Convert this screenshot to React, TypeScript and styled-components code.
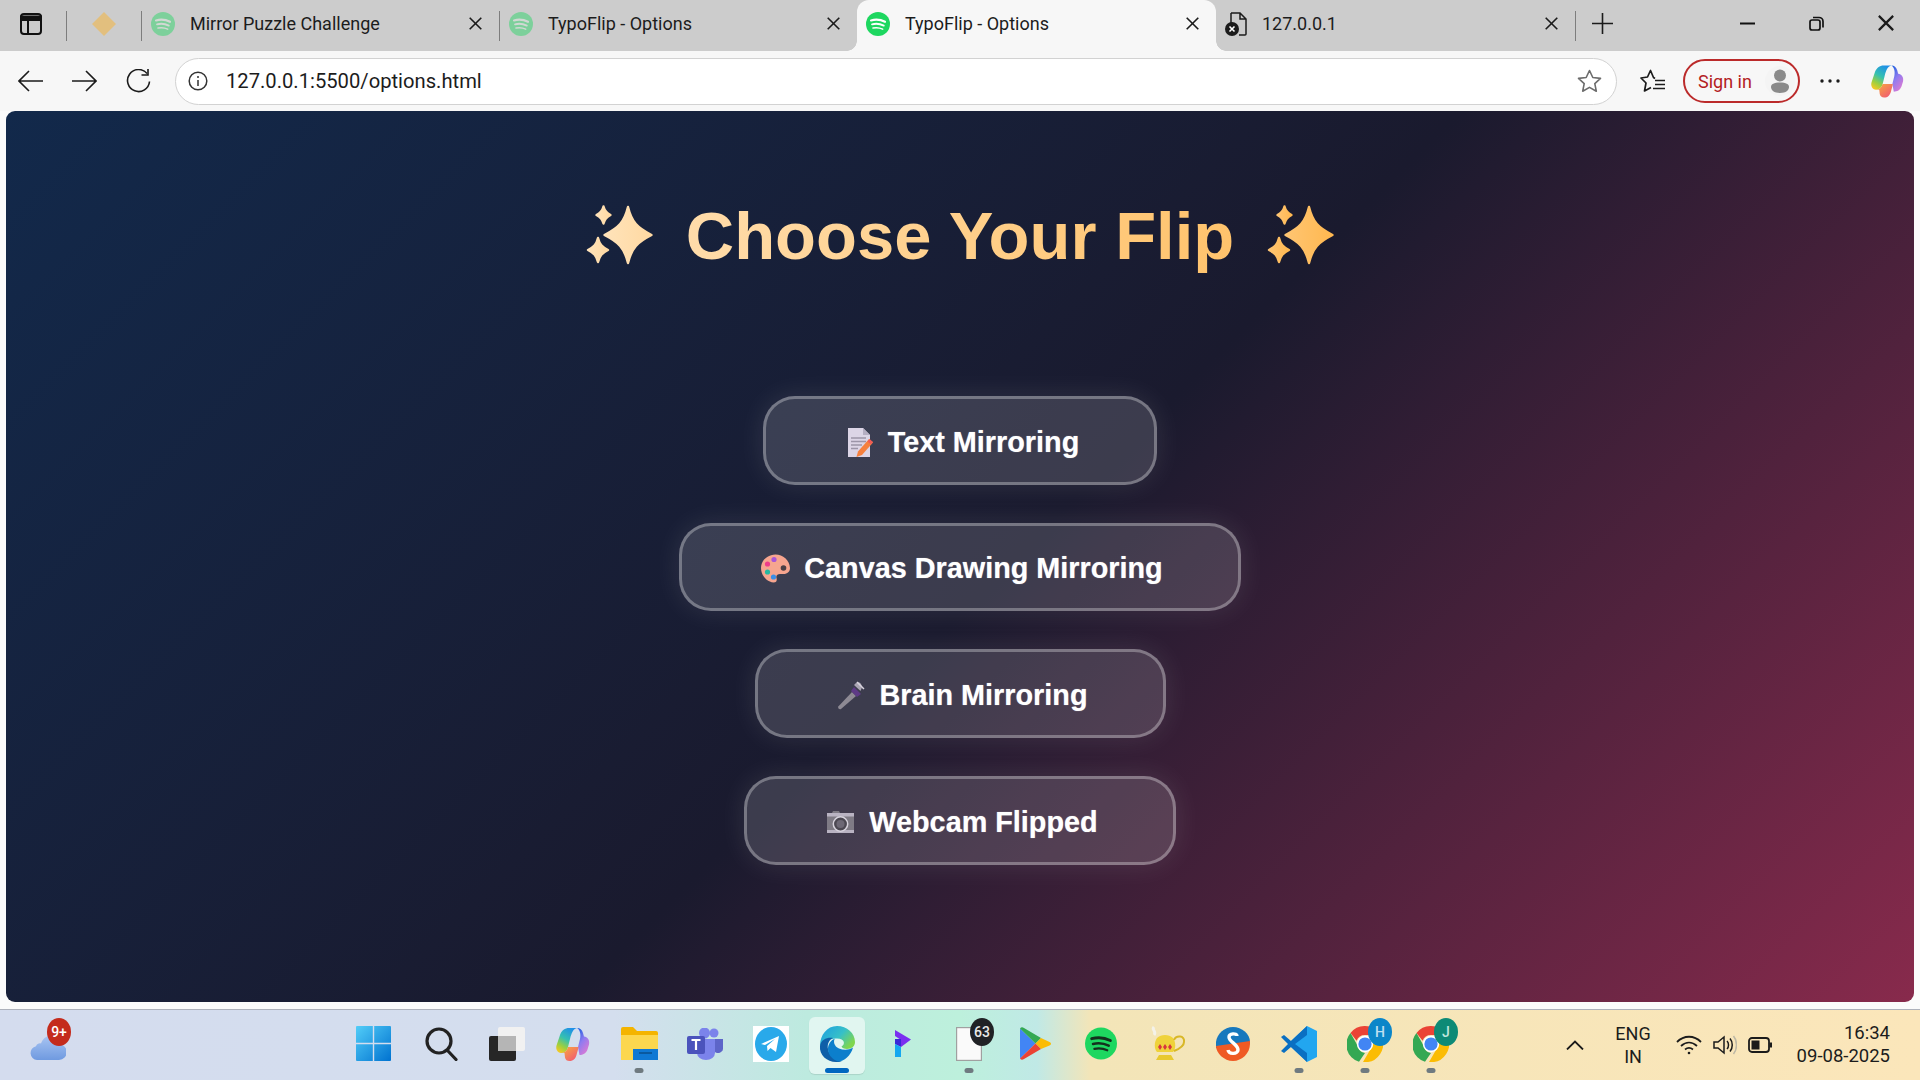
import styled, { createGlobalStyle } from "styled-components"

const GlobalStyle = createGlobalStyle`
  html, body {
    margin: 0;
    padding: 0;
    width: 1920px;
    height: 1080px;
    overflow: hidden;
    background: #f7f7f7;
    font-family: Roboto, "Liberation Sans", sans-serif;
  }
  * { box-sizing: border-box; }
`

/* ---------- small drawings ---------- */

const SpotifyIcon = ({ size = 24, faded = false }: { size?: number; faded?: boolean }) => (
  <svg width={size} height={size} viewBox="0 0 24 24" opacity={faded ? 0.45 : 1}>
    <circle cx="12" cy="12" r="12" fill="#1ed760" />
    <g fill="none" stroke={faded ? "#dbe8df" : "#fff"} strokeLinecap="round">
      <path d="M5 8.4c4.6-1.3 9.6-.9 14 1.4" strokeWidth="2.1" />
      <path d="M6 12.3c4-1 8-.6 11.8 1.3" strokeWidth="1.8" />
      <path d="M7 16c3.3-.7 6.6-.4 9.7 1.1" strokeWidth="1.5" />
    </g>
  </svg>
)

const SpotifyDark = () => (
  <svg width="32" height="33" viewBox="0 0 24 24">
    <circle cx="12" cy="12" r="12" fill="#1ed760" />
    <g fill="none" stroke="#14301e" strokeLinecap="round">
      <path d="M5 8.4c4.6-1.3 9.6-.9 14 1.4" strokeWidth="2.2" />
      <path d="M6 12.3c4-1 8-.6 11.8 1.3" strokeWidth="1.9" />
      <path d="M7 16c3.3-.7 6.6-.4 9.7 1.1" strokeWidth="1.6" />
    </g>
  </svg>
)

const CloseIcon = ({ size = 13, weight = 1.6 }: { size?: number; weight?: number }) => (
  <svg width={size} height={size} viewBox="0 0 13 13">
    <path d="M.7.7l11.6 11.6M12.3.7L.7 12.3" stroke="#1b1b1b" strokeWidth={weight} fill="none" />
  </svg>
)

const CopilotIcon = ({ id, width, height }: { id: string; width: number; height: number }) => (
  <svg width={width} height={height} viewBox="0 0 34 34">
    <defs>
      <linearGradient id={`${id}a`} x1="0.7" x2="0.2" y1="0" y2="1">
        <stop offset="0" stopColor="#1f8fe8" />
        <stop offset="0.45" stopColor="#35c1b0" />
        <stop offset="0.75" stopColor="#9ccf3f" />
        <stop offset="1" stopColor="#f6c922" />
      </linearGradient>
      <linearGradient id={`${id}b`} x1="0.2" x2="0.8" y1="0" y2="1">
        <stop offset="0" stopColor="#1f5fe0" />
        <stop offset="0.45" stopColor="#8f7cf0" />
        <stop offset="1" stopColor="#e57ad0" />
      </linearGradient>
      <linearGradient id={`${id}c`} x1="0" x2="1" y1="0" y2="1">
        <stop offset="0" stopColor="#f8b03a" />
        <stop offset="1" stopColor="#f0507a" />
      </linearGradient>
    </defs>
    <path d="M13 1h8c-4 1-5.5 5-7 11l-2 8c-1 4-3.5 6-7 6C1.5 26-.5 22 .5 18.5L4 8c1.5-4.5 5-7 9-7z" fill={`url(#${id}a)`} />
    <path d="M21 1c3 0 5 1.5 6 5l1 3.5c3.5.5 6 3.5 5 8l-1.500 5c-1.500 4-4.500 5.500-8 5.500L22 20l2-8c1-5 0-9-3-11z" fill={`url(#${id}b)`} />
    <path d="M5 26c3.5 0 6-2 7-6h10.500c-.5 3-1 4-2 8-1 3.500-3 6-7 6-2.500 0-4-1-4.500-3.500L8.500 26z" fill={`url(#${id}c)`} />
  </svg>
)

const star = (cx: number, cy: number, rx: number, ry: number) =>
  `M${cx} ${cy - ry}C${cx + rx * 0.16} ${cy - ry * 0.45} ${cx + rx * 0.4} ${cy - ry * 0.26} ${cx + rx} ${cy}` +
  `C${cx + rx * 0.4} ${cy + ry * 0.26} ${cx + rx * 0.16} ${cy + ry * 0.45} ${cx} ${cy + ry}` +
  `C${cx - rx * 0.16} ${cy + ry * 0.45} ${cx - rx * 0.4} ${cy + ry * 0.26} ${cx - rx} ${cy}` +
  `C${cx - rx * 0.4} ${cy - ry * 0.26} ${cx - rx * 0.16} ${cy - ry * 0.45} ${cx} ${cy - ry}Z`

const Sparkles = ({ from, to, id }: { from: string; to: string; id: string }) => (
  <svg width="67" height="60" viewBox="0 0 67 60">
    <defs>
      <linearGradient id={id} x1="0" x2="1" y1="0" y2="0">
        <stop offset="0" stopColor={from} />
        <stop offset="1" stopColor={to} />
      </linearGradient>
    </defs>
    <g fill={`url(#${id})`} stroke={`url(#${id})`} strokeWidth="2.4" strokeLinejoin="round">
      <path d={star(42, 30, 23.5, 28)} />
      <path d={star(17.5, 10, 7, 8.5)} />
      <path d={star(12, 45, 10, 12)} />
    </g>
  </svg>
)

const MemoEmoji = () => (
  <svg width="29" height="29" viewBox="0 0 29 29">
    <path d="M3 0h15l7 7v22H3z" fill="#dcd5e6" />
    <path d="M18 0l7 7h-7z" fill="#b5aec2" />
    <path d="M6 10h15M6 13.5h15M6 17h11M6 20.5h7" stroke="#9c95a8" strokeWidth="1.3" />
    <path d="M24 11l4 3.5-11 12.5-5.5 2 1.5-5.5z" fill="#f5803e" />
    <path d="M24.5 11l3.5 3-2 2.5-3.5-3z" fill="#f15b56" />
  </svg>
)

const PaletteEmoji = () => (
  <svg width="29" height="29" viewBox="0 0 29 29">
    <path d="M14.5.5C6.5.5 0 6.5 0 14s6 14 12.5 14.5c3.5 0 3.5-2.5 3-4.5-.7-2.5 1-4 3.5-4h3.500c4 0 6.500-2.500 6.500-6C28.500 6 22 .5 14.500.5z" fill="#f6a58f" />
    <circle cx="22.5" cy="14" r="2.8" fill="#4a3f46" />
    <circle cx="6.5" cy="10" r="2.6" fill="#ee3d8b" />
    <circle cx="13" cy="5.5" r="2.6" fill="#a855d8" />
    <circle cx="6.5" cy="18" r="2.6" fill="#26b8a0" />
    <circle cx="12.5" cy="23" r="2.6" fill="#3a8ee6" />
  </svg>
)

const MicEmoji = () => (
  <svg width="29" height="29" viewBox="0 0 29 29">
    <path d="M15 11l4 4L4 28c-1.5 1-3.5-.8-2.7-2.5z" fill="#8e8a94" />
    <path d="M17 6l7 7-4 3-6-6z" fill="#5e3a86" />
    <path d="M19 2c3-2.4 7 1.5 5.5 5.5l-1 2.5L17 4z" fill="#a9a4b2" />
    <path d="M20 1l7 7" stroke="#d8d4de" strokeWidth="1.5" />
  </svg>
)

const CameraEmoji = () => (
  <svg width="29" height="24" viewBox="0 0 29 24">
    <path d="M1 3h5l1-2h6l1 2h14v20H1z" fill="#7f7b85" />
    <rect x="1" y="3" width="27" height="3.5" fill="#b9b3c2" />
    <rect x="1" y="20" width="27" height="3" fill="#b9b3c2" />
    <circle cx="14.5" cy="14" r="7.2" fill="#4c4852" stroke="#d8d4de" strokeWidth="1.5" />
    <circle cx="14.5" cy="14" r="4" fill="#6d6875" />
  </svg>
)

const ChromeIcon = () => (
  <svg width="36" height="36" viewBox="0 0 36 36">
    <path d="M18 0a18 18 0 0 1 15.6 9H18a9 9 0 0 0-8.4 5.8L3.5 7A18 18 0 0 1 18 0z" fill="#ea4335" />
    <path d="M3.5 7l7.6 13.5A8 8 0 0 0 18 27l-6 8.8A18 18 0 0 1 3.5 7z" fill="#34a853" />
    <path d="M33.6 9A18 18 0 0 1 16 36l8.5-14.5A8 8 0 0 0 24 12z" fill="#fbbc04" />
    <circle cx="18" cy="18" r="8.2" fill="#fff" />
    <circle cx="18" cy="18" r="6.6" fill="#4285f4" />
  </svg>
)

/* ---------- tab strip ---------- */

const TabStrip = styled.div`
  height: 51px;
  display: flex;
  align-items: stretch;
  background: #cccccc;
`

const SideSlot = styled.div<{ $w: number }>`
  width: ${(p) => p.$w}px;
  flex: none;
  display: flex;
  align-items: center;
  justify-content: center;
  padding-bottom: 4px;
`

const Sep = styled.div`
  width: 1px;
  height: 30px;
  flex: none;
  margin-top: 11px;
  background: #7d7d7d;
`

const Tab = styled.div<{ $active?: boolean; $w: number }>`
  width: ${(p) => p.$w}px;
  flex: none;
  display: flex;
  align-items: center;
  padding: 0 17px 4px 9px;
  font-size: 18px;
  color: #1c1c1c;
  position: relative;
  background: ${(p) => (p.$active ? "#f7f7f7" : "transparent")};
  border-radius: ${(p) => (p.$active ? "12px 12px 0 0" : "0")};

  ${(p) =>
    p.$active &&
    `
    &::before, &::after {
      content: "";
      position: absolute;
      bottom: 0;
      width: 10px;
      height: 10px;
    }
    &::before {
      left: -10px;
      background: radial-gradient(circle at 0 0, transparent 9.5px, #f7f7f7 10px);
    }
    &::after {
      right: -10px;
      background: radial-gradient(circle at 100% 0, transparent 9.5px, #f7f7f7 10px);
    }
  `}
`

const TabTitle = styled.span`
  flex: 1;
  margin-left: 15px;
  white-space: nowrap;
`

const WindowButtons = styled.div`
  margin-left: auto;
  display: flex;
  align-items: center;
  width: 207px;
  padding: 0 0 5px 0;
`

const WinBtn = styled.div`
  width: 69px;
  display: flex;
  align-items: center;
  justify-content: center;
`

/* ---------- toolbar ---------- */

const Toolbar = styled.div`
  height: 60px;
  display: flex;
  align-items: center;
  background: #f7f7f7;
  padding: 0 0 0 3px;
`

const NavBtn = styled.div`
  width: 54px;
  height: 44px;
  flex: none;
  display: flex;
  align-items: center;
  justify-content: center;
`

const AddressBar = styled.div`
  width: 1442px;
  height: 47px;
  margin-left: 10px;
  border: 1.5px solid #d2d2d2;
  border-radius: 24px;
  background: #fff;
  display: flex;
  align-items: center;
  padding: 0 14px 0 12px;
  color: #1c1c1c;
  font-size: 20.2px;
`

const Url = styled.span`
  margin-left: 18px;
  flex: 1;
`

const ToolGroup = styled.div`
  margin-left: 9px;
  display: flex;
  align-items: center;
  gap: 3px;
`

const SignIn = styled.div`
  width: 117px;
  height: 44px;
  flex: none;
  border: 2px solid #bb2a2a;
  border-radius: 22px;
  color: #b3211f;
  font-size: 18px;
  display: flex;
  align-items: center;
  justify-content: space-between;
  padding: 0 3px 0 13px;
`

const Avatar = styled.div`
  width: 30px;
  height: 30px;
  border-radius: 50%;
  background: #f4f4f4;
  display: flex;
  align-items: center;
  justify-content: center;
`

/* ---------- page ---------- */

const PageFrame = styled.div`
  height: 898px;
  padding: 0 6px 7px;
  background: #fbfbfb;
`

const Page = styled.main`
  height: 891px;
  border-radius: 9px;
  background: linear-gradient(135deg, #12294b 0%, #1a1a2e 52%, #882a4c 100%);
  display: flex;
  flex-direction: column;
  align-items: center;
  padding-top: 93px;
  font-family: "Liberation Sans", Arial, sans-serif;
`

const Heading = styled.h1`
  margin: 0 0 130px;
  height: 62px;
  display: flex;
  align-items: center;
  gap: 33px;
  font-size: 67px;
  font-weight: 700;
  line-height: 62px;
`

const HeadingText = styled.span`
  background: linear-gradient(90deg, #ffdcaa, #ffc36c);
  -webkit-background-clip: text;
  background-clip: text;
  color: transparent;
  line-height: 80px;
  padding-top: 2px;
`

const Buttons = styled.div`
  display: flex;
  flex-direction: column;
  align-items: center;
  gap: 38.2px;
`

const ChoiceButton = styled.button`
  height: 88.5px;
  padding: 4px 75px 0 79px;
  display: flex;
  align-items: center;
  gap: 14px;
  border: 3px solid rgba(255, 255, 255, 0.3);
  border-radius: 32px;
  background: rgba(255, 255, 255, 0.15);
  box-shadow: 0 0 28px rgba(255, 255, 255, 0.1);
  color: #fff;
  font-family: inherit;
  font-size: 28.8px;
  font-weight: 700;
  text-shadow: 0 0 1px rgba(255, 255, 255, 0.6);
`

/* ---------- taskbar ---------- */

const Taskbar = styled.footer`
  height: 71px;
  border-top: 1.5px solid #adb1bb;
  background: linear-gradient(
    90deg,
    #d4dcee 0%,
    #d4deee 32%,
    #bdeadf 42%,
    #bdf0dc 50%,
    #c0e9e6 54%,
    #f3e5b8 56.8%,
    #fbe6ba 100%
  );
  position: relative;
  display: flex;
  align-items: center;
`

const Weather = styled.div`
  width: 342px;
  flex: none;
  padding: 6px 0 0 30px;
  position: relative;
  height: 100%;
  display: flex;
  align-items: center;
`

const AppSlot = styled.div`
  width: 66px;
  height: 100%;
  flex: none;
  position: relative;
  display: flex;
  align-items: center;
  justify-content: center;
  padding-bottom: 3px;
`

const StartSlot = styled(AppSlot)`
  padding-right: 4px;
`

const ActiveSlot = styled(AppSlot)`
  &::before {
    content: "";
    position: absolute;
    left: 5px;
    right: 5px;
    top: 7px;
    bottom: 6px;
    border-radius: 6px;
    background: rgba(255, 255, 255, 0.55);
    box-shadow: 0 1px 1px rgba(0, 0, 0, 0.1);
  }
  svg { position: relative; }
`

const Running = styled.i<{ $active?: boolean }>`
  position: absolute;
  bottom: 7px;
  left: 50%;
  transform: translateX(-50%);
  width: ${(p) => (p.$active ? 24 : 9)}px;
  height: 5px;
  border-radius: 3px;
  background: ${(p) => (p.$active ? "#0067c0" : "#6f7a80")};
`

const Badge = styled.span<{ $bg: string; $x: number; $color?: string }>`
  position: absolute;
  top: 8px;
  left: ${(p) => p.$x}px;
  width: 24px;
  height: 28px;
  border-radius: 50%;
  background: ${(p) => p.$bg};
  color: ${(p) => p.$color ?? "#fff"};
  font-size: 14px;
  font-weight: 500;
  display: flex;
  align-items: center;
  justify-content: center;
`

const Tray = styled.div`
  display: flex;
  align-items: center;
  height: 100%;
  margin-left: auto;
  width: 456px;
  color: #1c1c1c;
  padding: 0 30px 0 102px;
`

const Lang = styled.div`
  width: 58px;
  margin: 0 14px 0 20px;
  text-align: center;
  font-size: 18px;
  line-height: 23px;
`

const Clock = styled.div`
  margin-left: auto;
  text-align: right;
  font-size: 18.5px;
  line-height: 23px;
  white-space: nowrap;
`

const TrayIcon = styled.div`
  margin-right: 11px;
  display: flex;
  align-items: center;
`

const App = () => {
  return (
    <>
      <GlobalStyle />
      <TabStrip>
        <SideSlot $w={62}>
          <svg width="22" height="22" viewBox="0 0 22 22" fill="none" stroke="#111" strokeWidth="2">
            <rect x="1" y="1" width="20" height="20" rx="3" />
            <path d="M1 3.5h20V7H1z" fill="#111" />
            <path d="M8 7v14" />
          </svg>
        </SideSlot>
        <SideSlot $w={4} />
        <Sep />
        <SideSlot $w={74}>
          <svg width="24" height="24" viewBox="0 0 24 24">
            <path d="M12 0l12 12-12 12L0 12z" fill="#e2bf7e" />
          </svg>
        </SideSlot>
        <Sep />
        <Tab $w={357}>
          <SpotifyIcon faded />
          <TabTitle>Mirror Puzzle Challenge</TabTitle>
          <CloseIcon />
        </Tab>
        <Sep />
        <Tab $w={357}>
          <SpotifyIcon faded />
          <TabTitle>TypoFlip - Options</TabTitle>
          <CloseIcon />
        </Tab>
        <Tab $w={359} $active>
          <SpotifyIcon />
          <TabTitle>TypoFlip - Options</TabTitle>
          <CloseIcon />
        </Tab>
        <Tab $w={359}>
          <svg width="22" height="24" viewBox="0 0 22 24" fill="none">
            <path d="M6 1h9l6 6v15a1 1 0 0 1-1 1h-6M6 1v10M15 1v6h6" stroke="#1b1b1b" strokeWidth="1.5" />
            <circle cx="7" cy="17" r="7" fill="#1b1b1b" />
            <path d="M4.5 14.5l5 5M9.5 14.5l-5 5" stroke="#fff" strokeWidth="1.6" />
          </svg>
          <TabTitle>127.0.0.1</TabTitle>
          <CloseIcon />
        </Tab>
        <Sep />
        <SideSlot $w={52}>
          <svg width="21" height="21" viewBox="0 0 21 21">
            <path d="M10.5 0v21M0 10.5h21" stroke="#1b1b1b" strokeWidth="1.6" />
          </svg>
        </SideSlot>
        <WindowButtons>
          <WinBtn>
            <svg width="15" height="3" viewBox="0 0 15 3">
              <path d="M0 1.5h15" stroke="#111" strokeWidth="2" />
            </svg>
          </WinBtn>
          <WinBtn>
            <svg width="15" height="15" viewBox="0 0 15 15" fill="none" stroke="#111" strokeWidth="1.7">
              <rect x="1" y="4" width="10" height="10" rx="2" />
              <path d="M4 1.5h6a4 4 0 0 1 4 4v6" />
            </svg>
          </WinBtn>
          <WinBtn>
            <CloseIcon size={16} weight={1.8} />
          </WinBtn>
        </WindowButtons>
      </TabStrip>

      <Toolbar>
        <NavBtn>
          <svg width="25" height="22" viewBox="0 0 25 22" fill="none" stroke="#1b1b1b" strokeWidth="1.6">
            <path d="M25 11H1.5M11 1L1 11l10 10" />
          </svg>
        </NavBtn>
        <NavBtn>
          <svg width="25" height="22" viewBox="0 0 25 22" fill="none" stroke="#1b1b1b" strokeWidth="1.6">
            <path d="M0 11h23.5M14 1l10 10-10 10" />
          </svg>
        </NavBtn>
        <NavBtn>
          <svg width="25" height="25" viewBox="0 0 25 25" fill="none" stroke="#1b1b1b" strokeWidth="1.6">
            <path d="M21 4.5A11 11 0 1 0 23.5 12.5" />
            <path d="M22 0v6h-6.5" />
          </svg>
        </NavBtn>
        <AddressBar>
          <svg width="20" height="20" viewBox="0 0 20 20" fill="none" stroke="#333" strokeWidth="1.5">
            <circle cx="10" cy="10" r="8.8" />
            <path d="M10 9v6M10 5v2" />
          </svg>
          <Url>127.0.0.1:5500/options.html</Url>
          <svg width="25" height="24" viewBox="0 0 25 24" fill="none" stroke="#6c6c6c" strokeWidth="1.6" strokeLinejoin="round">
            <path d="M12.5 1.5l3.3 7 7.7.9-5.7 5.2 1.5 7.6-6.8-3.8-6.8 3.8 1.5-7.6L1.5 9.4l7.7-.9z" />
          </svg>
        </AddressBar>
        <ToolGroup>
          <NavBtn>
            <svg width="26" height="25" viewBox="0 0 26 25" fill="none" stroke="#1b1b1b" strokeWidth="1.7" strokeLinejoin="round">
              <path d="M15 9.5l-1.5-1L10.5 1.5 7.5 8 1 9l5 5-1.5 8 6.5-3.5" />
              <path d="M15 11.5h10M15 15.5h10M13 19.5h12" />
            </svg>
          </NavBtn>
          <SignIn>
            Sign in
            <Avatar>
              <svg width="20" height="24" viewBox="0 0 20 24" fill="#8a8a8a">
                <circle cx="10" cy="6.5" r="6" />
                <path d="M1 18c0-3 3-4.5 9-4.5s9 1.5 9 4.5-3 6-9 6-9-3-9-6z" />
              </svg>
            </Avatar>
          </SignIn>
          <NavBtn>
            <svg width="20" height="4" viewBox="0 0 20 4" fill="#1b1b1b">
              <circle cx="2" cy="2" r="1.7" />
              <circle cx="10" cy="2" r="1.7" />
              <circle cx="18" cy="2" r="1.7" />
            </svg>
          </NavBtn>
          <NavBtn>
            <CopilotIcon id="cpt" width={33} height={36} />
          </NavBtn>
        </ToolGroup>
      </Toolbar>

      <PageFrame>
        <Page>
          <Heading>
            <Sparkles id="sp1" from="#ffe3ba" to="#ffd9a2" />
            <HeadingText>Choose Your Flip</HeadingText>
            <Sparkles id="sp2" from="#ffc572" to="#ffb850" />
          </Heading>
          <Buttons>
            <ChoiceButton><MemoEmoji />Text Mirroring</ChoiceButton>
            <ChoiceButton><PaletteEmoji />Canvas Drawing Mirroring</ChoiceButton>
            <ChoiceButton><MicEmoji />Brain Mirroring</ChoiceButton>
            <ChoiceButton><CameraEmoji />Webcam Flipped</ChoiceButton>
          </Buttons>
        </Page>
      </PageFrame>

      <Taskbar>
        <Weather>
          <svg width="36" height="24" viewBox="0 0 36 24">
            <defs>
              <linearGradient id="cloud" x1="0" x2="0" y1="0" y2="1">
                <stop offset="0" stopColor="#a8c4f2" />
                <stop offset="1" stopColor="#6f9ae0" />
              </linearGradient>
            </defs>
            <path d="M26 2l5 1-2 5z" fill="#f0922c" />
            <path d="M7 24a7 7 0 0 1-1-13.800C7 8 9 7 11 7.500 12.500 3 16 0 20 0c5 0 8 3.500 8.500 8A8 8 0 0 1 29 24z" fill="url(#cloud)" />
          </svg>
          <Badge $bg="#c42b1c" $x={47} $color="#fff">9+</Badge>
        </Weather>
        <StartSlot>
          <svg width="35" height="35" viewBox="0 0 35 35">
            <defs>
              <linearGradient id="win" x1="0" x2="1" y1="0" y2="1">
                <stop offset="0" stopColor="#52cdf8" />
                <stop offset="1" stopColor="#0072d0" />
              </linearGradient>
            </defs>
            <path d="M1 0h15.8v16.8H0V1a1 1 0 0 1 1-1zM18.2 0H34a1 1 0 0 1 1 1v15.8H18.2zM0 18.2h16.8V35H1a1 1 0 0 1-1-1zM18.2 18.2H35V34a1 1 0 0 1-1 1H18.2z" fill="url(#win)" />
          </svg>
        </StartSlot>
        <AppSlot>
          <svg width="33" height="34" viewBox="0 0 33 34" fill="none" stroke="#222" strokeWidth="3.2" strokeLinecap="round">
            <circle cx="14" cy="14" r="12" />
            <path d="M23 24l8 8.5" />
          </svg>
        </AppSlot>
        <AppSlot>
          <svg width="36" height="34" viewBox="0 0 36 34">
            <rect x="0" y="9" width="27" height="25" rx="2" fill="#262626" />
            <rect x="9" y="0" width="27" height="24" rx="2" fill="#f1f1f1" />
            <rect x="9" y="9" width="18" height="15" fill="#b5b5b5" />
          </svg>
        </AppSlot>
        <AppSlot>
          <CopilotIcon id="cpb" width={36} height={34} />
        </AppSlot>
        <AppSlot>
          <svg width="37" height="33" viewBox="0 0 37 33">
            <path d="M0 2a2 2 0 0 1 2-2h10l4 4h19a2 2 0 0 1 2 2v27H0z" fill="#f4b400" />
            <path d="M0 8h37v25H0z" fill="#fcd74f" />
            <path d="M12 22h25v11H12z" fill="#0f78d4" />
            <path d="M18 26h13" stroke="#0a4f8e" strokeWidth="1.5" />
          </svg>
          <Running />
        </AppSlot>
        <AppSlot>
          <svg width="36" height="32" viewBox="0 0 36 32">
            <circle cx="27" cy="5" r="4.5" fill="#7b83eb" />
            <circle cx="17.5" cy="5" r="5.5" fill="#7b83eb" />
            <path d="M10 11h18v14a9 7 0 0 1-18 0z" fill="#7b83eb" />
            <path d="M28 11h8v10a5 5 0 0 1-8 3z" fill="#5d65c9" />
            <rect x="0" y="8" width="18" height="18" rx="2" fill="#4b53bc" />
            <path d="M4.5 12h9M9 12v10" stroke="#fff" strokeWidth="2.2" />
          </svg>
        </AppSlot>
        <AppSlot>
          <svg width="36" height="36" viewBox="0 0 36 36">
            <rect width="36" height="36" fill="#fff" />
            <ellipse cx="18" cy="18" rx="16" ry="17" fill="#29a9ea" />
            <path d="M8 18l18-8-3 16-5.5-4-3 3-.5-5 8-7-10 6z" fill="#fff" />
          </svg>
        </AppSlot>
        <ActiveSlot>
          <svg width="36" height="36" viewBox="0 0 36 36">
            <defs>
              <linearGradient id="edgeA" x1="0" x2="1" y1="0" y2="0.6">
                <stop offset="0" stopColor="#1b9de2" />
                <stop offset="0.6" stopColor="#36c0c8" />
                <stop offset="1" stopColor="#7fd64f" />
              </linearGradient>
            </defs>
            <path d="M18 0c10 0 18 7 18 16 0 4-3 7-8 7-3 0-5-1-5.5-2.5 4-2 3.5-8-4.5-8C11 12.5 6 15 1 20 1 9 8 0 18 0z" fill="url(#edgeA)" />
            <path d="M1 20C2 13 9 11 14 12c-4 2-6 6-5 11 1 6 7 12 14 12-2 1-4 1-6 1C8 36 0 29 1 20z" fill="#0f5fa8" />
            <path d="M9 23c0-5 3-9 7-10.5-2 2.5-1 8 4 10 5 2 10 1.5 14-1-2 8-9 14-15 14-6-2-10-7-10-12.5z" fill="#0c7fcc" />
          </svg>
          <Running $active />
        </ActiveSlot>
        <AppSlot>
          <svg width="16" height="27" viewBox="0 0 16 27">
            <path d="M0 0l16 9.5L6 17V10L0 6z" fill="#7a2ff0" />
            <path d="M0 9h6v8l-6-3z" fill="#3a28d8" />
            <path d="M0 14l6 3v10H0z" fill="#14a8f0" />
          </svg>
        </AppSlot>
        <AppSlot>
          <svg width="26" height="34" viewBox="0 0 26 34">
            <rect x="0.6" y="0.6" width="24.8" height="32.8" fill="#fafafa" stroke="#a0a0a0" strokeWidth="1.2" />
          </svg>
          <Badge $bg="#202225" $x={34} $color="#e8e8e8">63</Badge>
          <Running />
        </AppSlot>
        <AppSlot>
          <svg width="31" height="33" viewBox="0 0 31 33">
            <path d="M0 1.5v30L15.5 16.5z" fill="#4285f4" />
            <path d="M0 1.5c1-1.5 2.5-1.5 4-.6L21 11l-5.5 5.5z" fill="#34a853" />
            <path d="M21 11l8.5 4c2 1 2 2.5 0 3.5L21 22l-5.500-5.500z" fill="#fbbc04" />
            <path d="M0 31.500c1 1.500 2.500 1.500 4 .6L21 22l-5.500-5.500z" fill="#ea4335" />
          </svg>
        </AppSlot>
        <AppSlot>
          <SpotifyDark />
        </AppSlot>
        <AppSlot>
          <svg width="36" height="36" viewBox="0 0 36 36">
            <path d="M5 1c-3 3 3 4 0 8" stroke="#f4f2ea" strokeWidth="3" fill="none" />
            <path d="M8 12c4-4 12-4 16 0 3 4 3 11 0 14H8c-3-3-3-10 0-14z" fill="#efd23a" />
            <path d="M25 14c2-5 11-5 10 2 0 4-5 7-10 9" stroke="#d8b727" strokeWidth="2" fill="none" />
            <path d="M10 29h12l3 5H7z" fill="#e8c92f" />
            <path d="M11 18l2 3-2 3-2-3zM16 18l2 3-2 3-2-3zM21 18l2 3-2 3-2-3z" fill="#d9363e" />
          </svg>
        </AppSlot>
        <AppSlot>
          <svg width="34" height="34" viewBox="0 0 34 34">
            <path d="M17 0c9 0 17 7 17 15L0 21V15C1 7 8 0 17 0z" fill="#1778bd" />
            <path d="M0 19l34-5v3c0 9-8 17-17 17S0 26 0 19z" fill="#ef5a24" />
            <path d="M21 9c0-3-8-3-8 1 0 5 9 7 9 13 0 4-9 5-10 0" fill="none" stroke="#fff" strokeWidth="3.4" />
          </svg>
        </AppSlot>
        <AppSlot>
          <svg width="36" height="36" viewBox="0 0 36 36">
            <path d="M26 0l10 5v26l-10 5-16-15 0-6z" fill="#22a6f0" />
            <path d="M26 0v9L14 18l12 9v9L10 21 3 27 0 25l7-7-7-7 3-2 7 6z" fill="#0a6fc2" />
          </svg>
          <Running />
        </AppSlot>
        <AppSlot>
          <ChromeIcon />
          <Badge $bg="#0b86c9" $x={36} $color="#bfe0f2">H</Badge>
          <Running />
        </AppSlot>
        <AppSlot>
          <ChromeIcon />
          <Badge $bg="#0d8a76" $x={36} $color="#bfe7dd">J</Badge>
          <Running />
        </AppSlot>
        <Tray>
          <svg width="18" height="10" viewBox="0 0 18 10" fill="none" stroke="#1b1b1b" strokeWidth="1.8">
            <path d="M1 9.5L9 1.5l8 8" />
          </svg>
          <Lang>ENG<br />IN</Lang>
          <TrayIcon>
            <svg width="26" height="20" viewBox="0 0 26 20" fill="none" stroke="#1b1b1b" strokeWidth="1.8">
              <path d="M1 7c7-7 17-7 24 0M5 11c5-4.5 11-4.5 16 0M9 14.5c2.5-2 5.5-2 8 0" />
              <circle cx="13" cy="18" r="1.3" fill="#1b1b1b" stroke="none" />
            </svg>
          </TrayIcon>
          <TrayIcon>
            <svg width="24" height="20" viewBox="0 0 24 20" fill="none" stroke="#1b1b1b" strokeWidth="1.5">
              <path d="M1 7v6h4l6 5V2L5 7z" />
              <path d="M14 6c2 2 2 6 0 8M17 3.5c3 3.5 3 9.5 0 13" />
              <path d="M20.5 1c4 5 4 13 0 18" stroke="#bdb8a6" />
            </svg>
          </TrayIcon>
          <TrayIcon>
            <svg width="24" height="16" viewBox="0 0 24 16">
              <rect x="1" y="1" width="20" height="14" rx="3" fill="none" stroke="#1b1b1b" strokeWidth="1.8" />
              <rect x="3.5" y="3.5" width="8" height="9" fill="#1b1b1b" />
              <rect x="21.5" y="5.5" width="2.5" height="5" fill="#1b1b1b" />
            </svg>
          </TrayIcon>
          <Clock>16:34<br />09-08-2025</Clock>
        </Tray>
      </Taskbar>
    </>
  )
}

export default App
